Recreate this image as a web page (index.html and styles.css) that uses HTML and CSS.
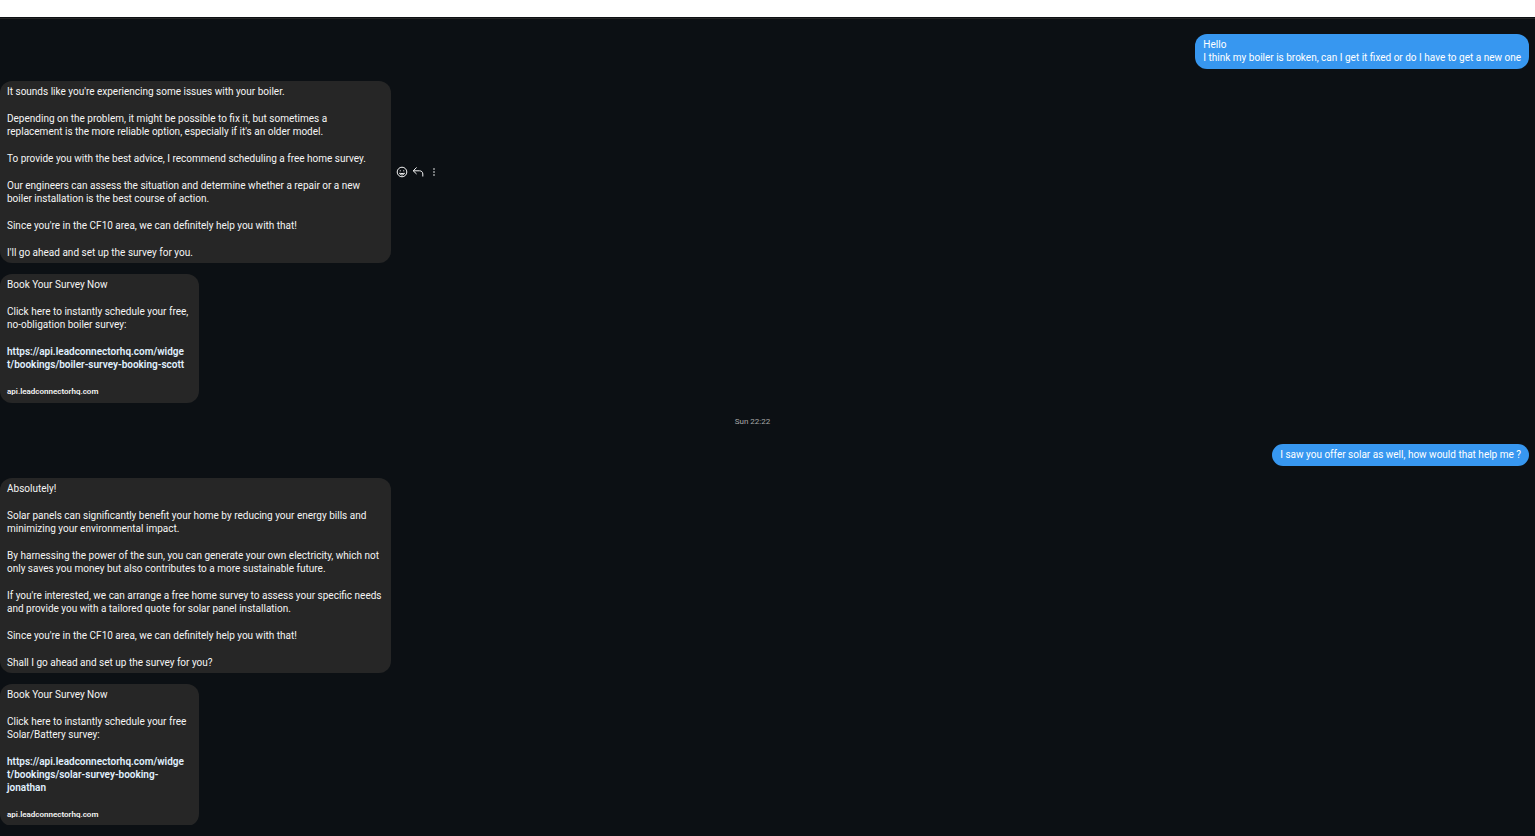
FILE: index.html
```
<!DOCTYPE html>
<html lang="en">
  <head>
    <meta charset="UTF-8" />
    <meta name="viewport" content="width=device-width, initial-scale=1.0" />
    <title>Messages</title>
    <link rel="stylesheet" href="styles.css">
  </head>
  <body>
    <div class="top-strip"></div>
    <main class="chat">
      <div class="message sent">
        <p>Hello<br />I think my boiler is broken, can I get it fixed or do I have to get a new one</p>
      </div>

      <div class="row">
        <div class="message received wide">
          <p>It sounds like you're experiencing some issues with your boiler.</p>
          <p>Depending on the problem, it might be possible to fix it, but sometimes a<br />replacement is the more reliable option, especially if it's an older model.</p>
          <p>To provide you with the best advice, I recommend scheduling a free home survey.</p>
          <p>Our engineers can assess the situation and determine whether a repair or a new<br />boiler installation is the best course of action.</p>
          <p>Since you're in the CF10 area, we can definitely help you with that!</p>
          <p>I'll go ahead and set up the survey for you.</p>
        </div>
        <div class="actions">
          <button type="button" aria-label="React">
            <svg viewBox="0 0 12 12">
              <circle cx="6" cy="6" r="4.8" />
              <path d="M3.500 7.200c.6 1.200 1.500 1.700 2.500 1.700s1.900-.5 2.500-1.700c-1.600.5-3.400.5-5 0z" />
              <path d="M4.300 4.300v1M7.700 4.300v1" />
            </svg>
          </button>
          <button type="button" aria-label="Reply">
            <svg viewBox="0 0 12 12">
              <path d="M4.600 1.500L1.200 4.800l3.400 3.200M1.200 4.800h6.300c2 0 3.300 1.300 3.300 3.200v2.500" />
            </svg>
          </button>
          <button type="button" aria-label="More">
            <svg viewBox="0 0 12 12" class="dots">
              <circle cx="6" cy="3" r="0.800" />
              <circle cx="6" cy="6" r="0.800" />
              <circle cx="6" cy="9" r="0.800" />
            </svg>
          </button>
        </div>
      </div>

      <div class="message received card">
        <p>Book Your Survey Now</p>
        <p>Click here to instantly schedule your free,<br />no-obligation boiler survey:</p>
        <p><a href="https://api.leadconnectorhq.com/widget/bookings/boiler-survey-booking-scott">https://api.leadconnectorhq.com/widge<br />t/bookings/boiler-survey-booking-scott</a></p>
        <p class="domain">api.leadconnectorhq.com</p>
      </div>

      <time class="timestamp">Sun 22:22</time>

      <div class="message sent">
        <p>I saw you offer solar as well, how would that help me ?</p>
      </div>

      <div class="message received wide">
        <p>Absolutely!</p>
        <p>Solar panels can significantly benefit your home by reducing your energy bills and<br />minimizing your environmental impact.</p>
        <p>By harnessing the power of the sun, you can generate your own electricity, which not<br />only saves you money but also contributes to a more sustainable future.</p>
        <p>If you're interested, we can arrange a free home survey to assess your specific needs<br />and provide you with a tailored quote for solar panel installation.</p>
        <p>Since you're in the CF10 area, we can definitely help you with that!</p>
        <p>Shall I go ahead and set up the survey for you?</p>
      </div>

      <div class="message received card">
        <p>Book Your Survey Now</p>
        <p>Click here to instantly schedule your free<br />Solar/Battery survey:</p>
        <p><a href="https://api.leadconnectorhq.com/widget/bookings/solar-survey-booking-jonathan">https://api.leadconnectorhq.com/widge<br />t/bookings/solar-survey-booking-<br />jonathan</a></p>
        <p class="domain">api.leadconnectorhq.com</p>
      </div>
    </main>
  </body>
</html>
```

FILE: styles.css
```
body {
  margin: 0;
  height: 100vh;
  display: flex;
  flex-direction: column;
  background-color: #0c1014;
  color: #f5f5f5;
  font-family: Roboto, "Liberation Sans", sans-serif;
  font-size: 10px;
  line-height: 13px;
}
p {
  margin: 0;
}
.top-strip {
  flex: none;
  height: 18px;
  box-sizing: border-box;
  background-color: white;
  border-bottom: 1px solid #0c1014;
}
.chat {
  flex: 1;
  min-height: 0;
  overflow: hidden;
  display: flex;
  flex-direction: column;
  align-items: flex-start;
  gap: 11px;
  margin-bottom: 11px;
  padding: 15px 6px 0 0;
  border-top: 1px solid #262626;
}
.row {
  display: flex;
  align-items: center;
  gap: 5px;
}
.message {
  flex: none;
  box-sizing: border-box;
  display: flex;
  flex-direction: column;
  gap: 14px;
  padding: 4px 7px;
  border-radius: 12px;
  white-space: nowrap;
}
.sent {
  align-self: flex-end;
  margin-bottom: 1px;
  padding: 4px 8px 5px;
  background-color: #3797f0;
  color: white;
}
.received {
  background-color: #262626;
}
.wide {
  width: 391px;
}
.card {
  width: 199px;
  padding-bottom: 5px;
}
.card a {
  color: #e0f1ff;
  font-weight: 600;
  text-decoration: none;
}
.domain {
  font-size: 8px;
  font-weight: 600;
}
.timestamp {
  align-self: center;
  margin: 1px 24px 5px 0;
  color: #a8a8a8;
  font-size: 8px;
}
.actions {
  display: flex;
  gap: 4px;
}
.actions button {
  width: 12px;
  height: 12px;
  padding: 0;
  border: none;
  background: none;
  color: #f5f5f5;
  cursor: pointer;
}
.actions svg {
  display: block;
  width: 12px;
  height: 12px;
  fill: none;
  stroke: currentColor;
}
.actions .dots {
  fill: currentColor;
  stroke: none;
}
```
